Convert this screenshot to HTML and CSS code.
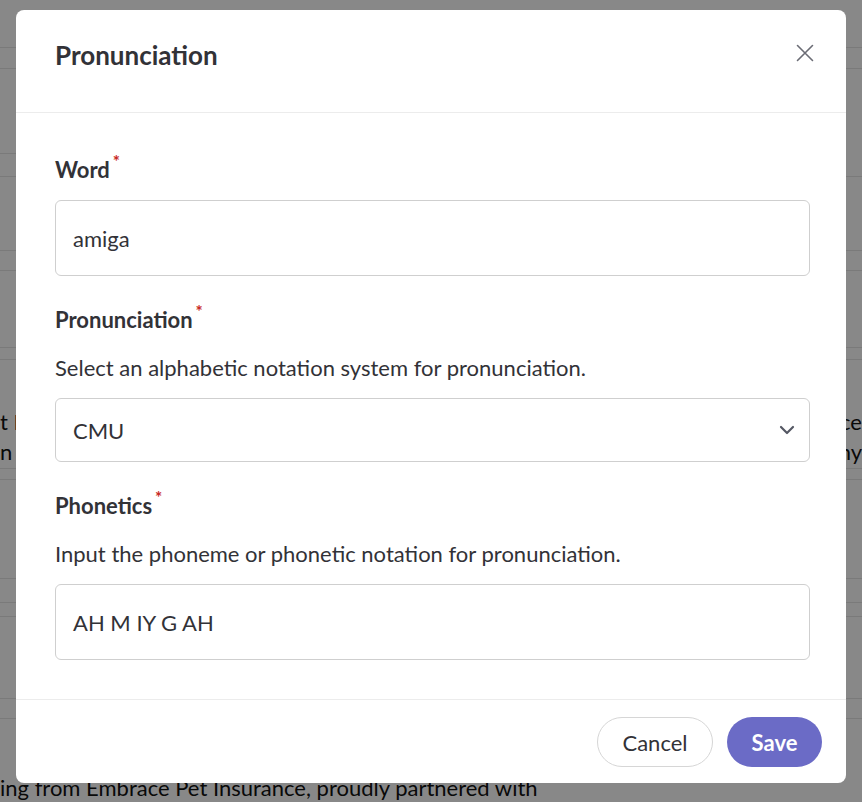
FILE: index.html
```html
<!DOCTYPE html>
<html lang="en">
<head>
    <meta charset="UTF-8">
    <title>Pronunciation</title>
    <link rel="stylesheet" href="styles.css">
</head>
<body>
    <div class="page">
        <div class="row"></div>
        <div class="row"></div>
        <div class="row row-short"></div>
        <div class="row"></div>
        <div class="row"></div>
        <div class="row"></div>
        <div class="row"></div>
        <div class="row"></div>
        <div class="row row-text">
            <div class="text-line"><span>t Ins</span><span>ce</span></div>
            <div class="text-line"><span>n acc</span><span>ny</span></div>
        </div>
        <div class="row"></div>
        <div class="row"></div>
        <div class="row"></div>
        <div class="row"></div>
        <div class="row"></div>
        <div class="row"></div>
        <div class="row-last">ing from Embrace Pet Insurance, proudly partnered with</div>
    </div>

    <div class="overlay">
        <div class="modal">
            <div class="modal-header">
                <h1>Pronunciation</h1>
                <button class="close" aria-label="Close">
                    <svg width="18" height="18" viewBox="0 0 18 18">
                        <path d="M1.5 1.5 L16.5 16.5 M16.5 1.5 L1.5 16.5" stroke="#6b6c75" stroke-width="1.6" fill="none" stroke-linecap="round"/>
                    </svg>
                </button>
            </div>

            <div class="modal-body">
                <div class="field">
                    <label class="label">Word<span class="req">*</span></label>
                    <div class="input tall">amiga</div>
                </div>

                <div class="field">
                    <label class="label">Pronunciation<span class="req">*</span></label>
                    <p class="hint">Select an alphabetic notation system for pronunciation.</p>
                    <div class="input select">
                        <span>CMU</span>
                        <svg width="16" height="10" viewBox="0 0 16 10">
                            <path d="M2 2 L8 8 L14 2" stroke="#555864" stroke-width="2.2" fill="none" stroke-linecap="round" stroke-linejoin="round"/>
                        </svg>
                    </div>
                </div>

                <div class="field">
                    <label class="label">Phonetics<span class="req">*</span></label>
                    <p class="hint">Input the phoneme or phonetic notation for pronunciation.</p>
                    <div class="input tall">AH M IY G AH</div>
                </div>
            </div>

            <div class="modal-footer">
                <button class="btn btn-cancel">Cancel</button>
                <button class="btn btn-save">Save</button>
            </div>
        </div>
    </div>
</body>
</html>
```

FILE: styles.css
```css
* {
    box-sizing: border-box;
}
body {
    font-family: Lato, 'Noto Sans', sans-serif;
    margin: 0;
    padding: 0;
    background-color: white;
    color: #111;
    overflow: hidden;
    height: 802px;
}

/* page behind the dialog */
.page {
    display: grid;
    grid-template-rows: 48px 21px 85px 23px 74px 20px 77px 12px 109px 11px 99px 24px 14px 82px 20px 83px;
}
.row {
    border-bottom: 1px solid #e5e5e5;
}
.row-short {
    border-bottom: none;
    background: linear-gradient(#e5e5e5, #e5e5e5) left bottom / 40px 1px no-repeat;
}
.row-text {
    padding-top: 47px;
    font-size: 22px;
}
.text-line {
    display: flex;
    justify-content: space-between;
    line-height: 30px;
}
.row-last {
    font-size: 22px;
    display: flex;
    align-items: flex-end;
    line-height: 24px;
    margin-bottom: 2px;
}

.overlay {
    position: fixed;
    inset: 0;
    background-color: rgba(0, 0, 0, 0.467);
    display: flex;
    justify-content: center;
    align-items: flex-start;
    padding-top: 10px;
}
.modal {
    width: 830px;
    background-color: white;
    border-radius: 8px;
    color: #323237;
}
.modal-header {
    height: 103px;
    border-bottom: 1px solid #ececec;
    display: flex;
    align-items: center;
    justify-content: space-between;
    padding: 0 32px 12px 39px;
}
.modal-header h1 {
    margin: 0;
    font-size: 26px;
    font-weight: bold;
}
.close {
    background: none;
    border: none;
    padding: 0;
    width: 18px;
    height: 18px;
    margin-top: -5px;
    cursor: pointer;
}
.modal-body {
    padding: 45px 36px 39px 39px;
    display: flex;
    flex-direction: column;
    gap: 32px;
}
.field {
    display: flex;
    flex-direction: column;
}
.label {
    font-size: 22px;
    font-weight: bold;
    line-height: 24px;
    margin-bottom: 18px;
}
.req {
    color: #c8281f;
    font-size: 17px;
    font-weight: bold;
    vertical-align: top;
    position: relative;
    top: -8px;
    margin-left: 3px;
}
.hint {
    margin: 6px 0 18px;
    font-size: 22px;
    line-height: 24px;
}
.input {
    border: 1px solid #cfcfcf;
    border-radius: 6px;
    font-size: 22px;
    padding: 0 17px;
    display: flex;
    align-items: center;
    height: 64px;
}
.input.tall {
    height: 76px;
}
.select {
    justify-content: space-between;
    padding-right: 14px;
}
.modal-footer {
    border-top: 1px solid #ececec;
    display: flex;
    justify-content: flex-end;
    gap: 14px;
    padding: 17px 24px 16px;
}
.btn {
    height: 50px;
    border-radius: 25px;
    font-family: Lato, 'Noto Sans', sans-serif;
    font-size: 22px;
    cursor: pointer;
}
.btn-cancel {
    width: 116px;
    background-color: white;
    border: 1px solid #d6d6d6;
    color: #323237;
}
.btn-save {
    width: 95px;
    background-color: #6b6bc6;
    border: none;
    color: white;
    font-weight: bold;
}
```
